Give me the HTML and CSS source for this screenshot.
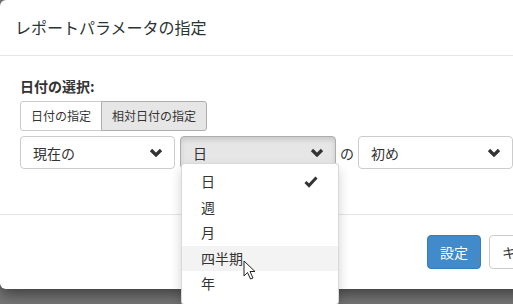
FILE: index.html
```html
<!DOCTYPE html>
<html lang="ja">

<head>
    <meta charset="UTF-8">
    <title>レポートパラメータの指定</title>
    <link rel="stylesheet" href="styles.css">
</head>

<body>
    <div class="modal">
        <div class="modal-header">
            <h4 class="modal-title">レポートパラメータの指定</h4>
        </div>

        <div class="modal-body">
            <label class="field-label">日付の選択:</label>
            <div class="btn-group">
                <button class="btn">日付の指定</button>
                <button class="btn active">相対日付の指定</button>
            </div>

            <div class="select-row">
                <div class="select">
                    <span>現在の</span>
                    <svg class="chevron" width="14" height="9" viewBox="0 0 14 9"><polyline points="2,2 7,7 12,2" /></svg>
                </div>

                <div class="dropdown">
                    <div class="select open">
                        <span>日</span>
                        <svg class="chevron" width="14" height="9" viewBox="0 0 14 9"><polyline points="2,2 7,7 12,2" /></svg>
                    </div>
                    <ul class="dropdown-menu">
                        <li class="selected">日
                            <svg class="check" width="14" height="12" viewBox="0 0 14 12"><polyline points="1.5,6 5,9.5 12.5,1.5" /></svg>
                        </li>
                        <li>週</li>
                        <li>月</li>
                        <li class="hover">四半期</li>
                        <li>年</li>
                    </ul>
                </div>

                <span class="joiner">の</span>

                <div class="select">
                    <span>初め</span>
                    <svg class="chevron" width="14" height="9" viewBox="0 0 14 9"><polyline points="2,2 7,7 12,2" /></svg>
                </div>
            </div>
        </div>

        <div class="modal-footer">
            <button class="btn btn-primary">設定</button>
            <button class="btn btn-default">キャンセル</button>
        </div>
    </div>

    <svg class="cursor" width="14" height="21" viewBox="0 0 14 21">
        <path d="M1 1 L1 16 L4.5 12.5 L7.5 19 L10 18 L7 11.5 L12 11.5 Z" />
    </svg>
</body>

</html>
```

FILE: styles.css
```css
/* Page and backdrop */
body {
    margin: 0;
    background-color: #777;
    font-family: "Noto Sans CJK JP", "Noto Sans", sans-serif;
    font-size: 14px;
    color: #333;
    overflow: hidden;
    height: 304px;
    position: relative;
}

.modal {
    width: 605px;
    background-color: white;
    border-radius: 6px;
    box-shadow: 0 5px 15px rgba(0, 0, 0, 0.5);
}

/* Header */
.modal-header {
    padding: 15px;
    border-bottom: 1px solid #e5e5e5;
}

.modal-title {
    margin: 0;
    font-size: 16px;
    font-weight: normal;
    line-height: 25px;
    color: #2a3535;
}

/* Body */
.modal-body {
    padding: 20px 20px 45px;
}

.field-label {
    display: block;
    font-weight: bold;
    line-height: 20px;
    margin-bottom: 5px;
}

.btn-group {
    display: flex;
}

.btn {
    font-family: inherit;
    font-size: 12px;
    line-height: 18px;
    padding: 5px 10px;
    background-color: white;
    border: 1px solid #ccc;
    color: #333;
    cursor: pointer;
}

.btn-group .btn:first-child {
    border-radius: 3px 0 0 3px;
}

.btn-group .btn:last-child {
    border-radius: 0 3px 3px 0;
    margin-left: -1px;
}

.btn.active {
    background-color: #e6e6e6;
    border-color: #adadad;
}

/* Select row */
.select-row {
    display: flex;
    align-items: center;
    margin-top: 5px;
}

.select {
    width: 155px;
    height: 33px;
    box-sizing: border-box;
    border: 1px solid #ccc;
    border-radius: 4px;
    padding: 0 11px 0 12px;
    display: flex;
    align-items: center;
    justify-content: space-between;
    background-color: white;
}

.select.open {
    width: 156px;
    background-color: #e6e6e6;
    border-color: #adadad;
    box-shadow: inset 0 3px 5px rgba(0, 0, 0, 0.125);
}

.chevron polyline {
    fill: none;
    stroke: #333;
    stroke-width: 3.2;
}

.dropdown {
    position: relative;
    margin-left: 5px;
}

.joiner {
    width: 22px;
    padding-left: 4px;
    box-sizing: border-box;
}

/* Dropdown menu */
.dropdown-menu {
    position: absolute;
    top: 27px;
    left: 1px;
    width: 158px;
    box-sizing: border-box;
    margin: 0;
    padding: 5px 0 7px;
    list-style: none;
    background-color: white;
    border: 1px solid rgba(0, 0, 0, 0.15);
    border-radius: 4px;
    box-shadow: 0 6px 12px rgba(0, 0, 0, 0.175);
    z-index: 10;
}

.dropdown-menu li {
    padding: 3px 20px 3px 19px;
    line-height: 19.5px;
    display: flex;
    align-items: center;
    justify-content: space-between;
}

.dropdown-menu li.hover {
    background-color: #f3f3f3;
}

.check polyline {
    fill: none;
    stroke: #333;
    stroke-width: 3;
}

/* Footer */
.modal-footer {
    display: flex;
    justify-content: flex-end;
    gap: 8px;
    padding: 20px;
    border-top: 1px solid #e5e5e5;
}

.modal-footer .btn {
    font-size: 14px;
    line-height: 20px;
    padding: 6px 12px;
    border-radius: 4px;
}

.btn-primary {
    background-color: #428bca;
    border-color: #357ebd;
    color: white;
}

/* Mouse pointer */
.cursor {
    position: absolute;
    left: 243px;
    top: 260px;
    z-index: 20;
}

.cursor path {
    fill: white;
    stroke: #222;
    stroke-width: 1;
}
```
